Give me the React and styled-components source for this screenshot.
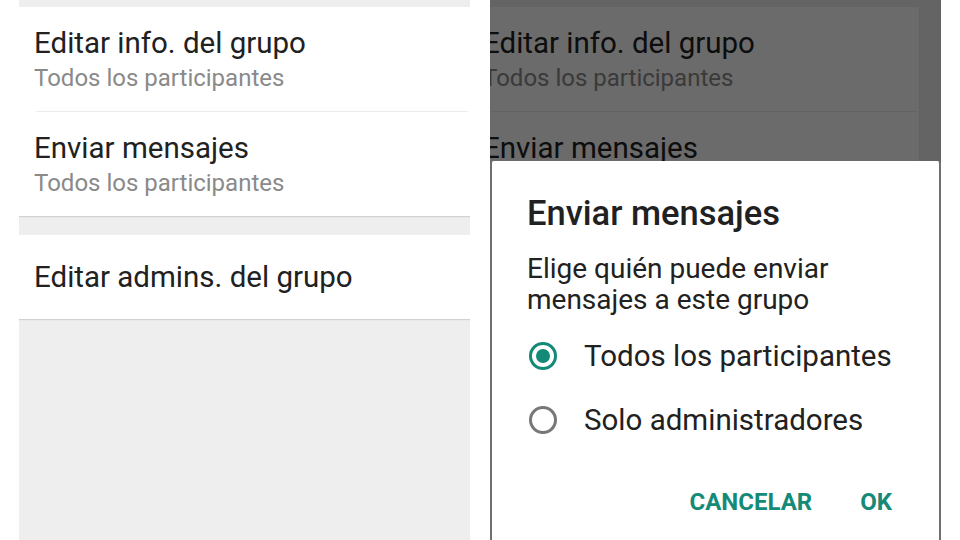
import React from 'react';
import styled, { createGlobalStyle } from 'styled-components';

const GlobalStyle = createGlobalStyle`
  html, body {
    margin: 0;
    padding: 0;
    background: #ffffff;
  }
  body {
    font-family: Roboto, "Noto Sans", Arial, sans-serif;
    width: 960px;
    height: 540px;
    overflow: hidden;
  }
`;

const Page = styled.div`
  display: flex;
  gap: 20px;
  padding-left: 19px;
  height: 540px;
`;

const Panel = styled.div`
  position: relative;
  width: 451px;
  height: 540px;
  overflow: hidden;
  background: #eeeeee;
`;

const List = styled.div`
  display: flex;
  flex-direction: column;
  width: 451px;
  margin-left: ${(p) => p.$shift || 0}px;
  padding-top: 7px;
`;

const Section = styled.div`
  display: flex;
  flex-direction: column;
  background: #ffffff;
  box-shadow: 0 1px 1px rgba(0, 0, 0, 0.12);
`;

const Spacer = styled.div`
  height: ${(p) => p.$size}px;
`;

const Item = styled.div`
  display: flex;
  flex-direction: column;
  justify-content: center;
  height: ${(p) => p.$height}px;
  padding-left: 15px;
`;

const Divider = styled.div`
  height: 1px;
  background: #ebebeb;
  margin-left: 17px;
  margin-right: 2px;
`;

const ItemTitle = styled.div`
  font-size: 29.5px;
  color: #212121;
  line-height: 34px;
`;

const ItemSub = styled.div`
  font-size: 24px;
  color: #8a8a8a;
  line-height: 28px;
  margin-top: 4px;
`;

const Overlay = styled.div`
  position: absolute;
  inset: 0;
  background: rgba(0, 0, 0, 0.58);
`;

const Dialog = styled.div`
  position: absolute;
  top: 161px;
  left: 0;
  right: 0;
  bottom: -10px;
  background: #ffffff;
  border-left: 2px solid #707070;
  border-right: 2px solid #707070;
  border-radius: 3px 3px 0 0;
  padding: 32px 46px 0 35px;
  display: flex;
  flex-direction: column;
`;

const DialogTitle = styled.div`
  font-size: 34.5px;
  font-weight: 500;
  color: #212121;
  line-height: 40px;
`;

const DialogBody = styled.div`
  font-size: 28px;
  color: #212121;
  line-height: 31px;
  margin-top: 20px;
`;

const Options = styled.div`
  display: flex;
  flex-direction: column;
  gap: 28px;
  margin-top: 23px;
`;

const Option = styled.div`
  display: flex;
  align-items: center;
  gap: 27px;
  height: 36px;
  font-size: 29.5px;
  color: #212121;
`;

const Radio = styled.span`
  width: 28px;
  height: 28px;
  flex: none;
  box-sizing: border-box;
  border-radius: 50%;
  border: 3px solid ${(p) => (p.$checked ? '#138a76' : '#787878')};
  display: flex;
  align-items: center;
  justify-content: center;
  margin-left: 2px;
  &::after {
    content: '';
    width: 14px;
    height: 14px;
    border-radius: 50%;
    background: ${(p) => (p.$checked ? '#138a76' : 'transparent')};
  }
`;

const Actions = styled.div`
  display: flex;
  justify-content: flex-end;
  gap: 48px;
  margin-top: 50px;
  padding-right: 1px;
`;

const Action = styled.span`
  font-size: 24px;
  font-weight: 700;
  color: #148a77;
  line-height: 28px;
`;

const Screen = ({ shift }) => (
  <List $shift={shift}>
    <Section>
      <Item $height={104}>
        <ItemTitle>Editar info. del grupo</ItemTitle>
        <ItemSub>Todos los participantes</ItemSub>
      </Item>
      <Divider />
      <Item $height={104}>
        <ItemTitle>Enviar mensajes</ItemTitle>
        <ItemSub>Todos los participantes</ItemSub>
      </Item>
    </Section>
    <Spacer $size={19} />
    <Section>
      <Item $height={84}>
        <ItemTitle>Editar admins. del grupo</ItemTitle>
      </Item>
    </Section>
  </List>
);

export default function App() {
  return (
    <>
      <GlobalStyle />
      <Page>
        <Panel>
          <Screen />
        </Panel>
        <Panel>
          <Screen shift={-22} />
          <Overlay />
          <Dialog>
            <DialogTitle>Enviar mensajes</DialogTitle>
            <DialogBody>
              Elige quién puede enviar
              <br />
              mensajes a este grupo
            </DialogBody>
            <Options>
              <Option>
                <Radio $checked />
                Todos los participantes
              </Option>
              <Option>
                <Radio />
                Solo administradores
              </Option>
            </Options>
            <Actions>
              <Action>CANCELAR</Action>
              <Action>OK</Action>
            </Actions>
          </Dialog>
        </Panel>
      </Page>
    </>
  );
}
